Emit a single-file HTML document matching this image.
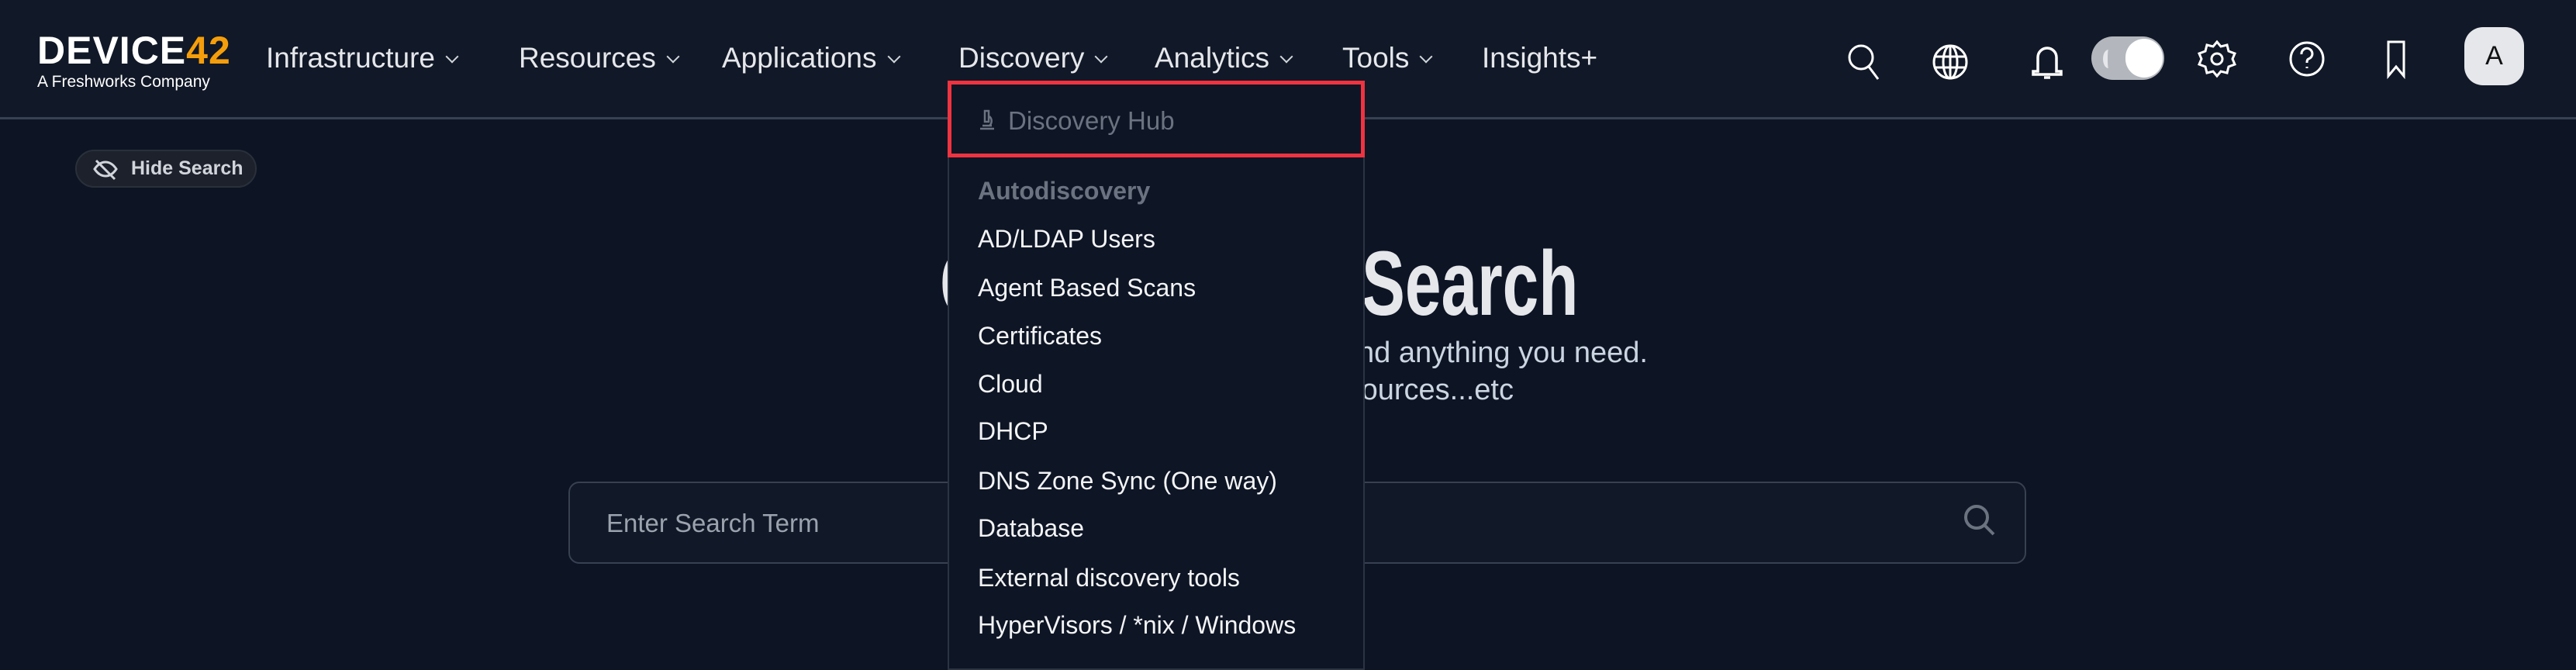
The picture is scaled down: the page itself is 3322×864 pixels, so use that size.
<!DOCTYPE html>
<html><head><meta charset="utf-8"><style>
*{margin:0;padding:0;box-sizing:border-box}
body{width:3322px;height:842px;overflow:hidden;background:#0d1424;font-family:"Liberation Sans",sans-serif;position:relative;color:#fff}
.hdr{position:absolute;left:0;top:0;width:3322px;height:154px;background:#111827;border-bottom:3px solid #374151}
.abs{position:absolute;white-space:nowrap}
.nav{font-size:37px;color:#e5e7eb;top:54px}
.chev{display:inline-block;width:12px;height:12px;border-right:2.5px solid #d1d5db;border-bottom:2.5px solid #d1d5db;transform:rotate(45deg);margin-left:16px;position:relative;top:-8px}
.dd{position:absolute;left:1222px;top:104px;width:538px;height:760px;background:#0e1525;border:2px solid #2b3442}
.it{position:absolute;left:1261px;font-size:32px;color:#f3f4f6}
.ttl{top:307px;font-size:118px;line-height:1;font-weight:bold;color:#e5e7eb;transform:scaleX(0.71);transform-origin:left top}
</style></head><body>
<div class="hdr"></div>
<div class="abs" style="left:48px;top:36px;font-size:50px;font-weight:bold;letter-spacing:1px;color:#fff">DEVICE<span style="color:#f59e0b">42</span></div>
<div class="abs" style="left:48px;top:94px;font-size:21px;color:#fff">A Freshworks Company</div>
<div class="abs nav" style="left:343px">Infrastructure<span class="chev"></span></div>
<div class="abs nav" style="left:669px">Resources<span class="chev"></span></div>
<div class="abs nav" style="left:931px">Applications<span class="chev"></span></div>
<div class="abs nav" style="left:1236px">Discovery<span class="chev"></span></div>
<div class="abs nav" style="left:1489px">Analytics<span class="chev"></span></div>
<div class="abs nav" style="left:1731px">Tools<span class="chev"></span></div>
<div class="abs nav" style="left:1911px">Insights+</div>
<svg class="abs" style="left:2370px;top:50px" width="540" height="60" viewBox="0 0 540 60" fill="none" stroke="#fff" stroke-width="3">
<circle cx="30" cy="24" r="15"/><path d="M40 36l12 16"/>
<g transform="translate(145 30)"><ellipse cx="0" cy="0" rx="21" ry="21"/><ellipse cx="0" cy="0" rx="9" ry="21"/><path d="M-21 -7h42M-21 7h42M0 -21v42"/></g>
<path d="M258 42v-18a12 12 0 0 1 24 0v18h6v4h-36v-4z M266 50h8" stroke-width="3.5"/>
</svg>
<div class="abs" style="left:2697px;top:47px;width:94px;height:56px;border-radius:28px;background:#b3b7bd"></div>
<div class="abs" style="left:2741px;top:50px;width:48px;height:50px;border-radius:25px;background:#fff"></div>
<div class="abs" style="left:2712px;top:64px;width:14px;height:24px;border-radius:50%;border-left:6px solid #e5e7eb"></div>
<svg class="abs" style="left:2820px;top:46px" width="320" height="64" viewBox="0 0 320 64" fill="none" stroke="#fff" stroke-width="3">
<circle cx="39" cy="30" r="7"/><path d="M39 8l5 6 8-2 2 8 8 3-3 7 3 7-8 3-2 8-8-2-5 6-5-6-8 2-2-8-8-3 3-7-3-7 8-3 2-8 8 2z"/>
<circle cx="155" cy="30" r="21"/><path d="M148 24a7 7 0 1 1 9 6c-2 1-2 3-2 5M155 40v2"/>
<path d="M260 8h20v44l-10-12-10 12z"/>
</svg>
<div class="abs" style="left:3178px;top:35px;width:77px;height:75px;border-radius:24px;background:#e5e7eb;color:#111;font-size:34px;text-align:center;line-height:75px">A</div>
<div class="abs" style="left:97px;top:193px;width:234px;height:49px;border-radius:25px;background:#1c212b;border:2px solid #2a303a;color:#d1d5db;font-size:25px;font-weight:bold;line-height:45px;padding-left:70px">Hide Search</div>
<svg class="abs" style="left:118px;top:203px" width="36" height="30" viewBox="0 0 36 30" fill="none" stroke="#d1d5db" stroke-width="3"><path d="M4 15c8-12 20-12 28 0c-8 12-20 12-28 0z"/><path d="M6 4l24 24"/></svg>
<div class="abs ttl" style="left:1212px">Global</div>
<div class="abs ttl" style="left:1756px">Search</div>
<div class="abs" style="right:1197px;top:434px;font-size:38px;color:#cbd5e1">Use Global Search to find anything you need.</div>
<div class="abs" style="right:1370px;top:482px;font-size:38px;color:#cbd5e1">Devices, Applications, Resources...etc</div>
<div class="abs" style="left:733px;top:621px;width:1880px;height:106px;border-radius:14px;background:#111827;border:2px solid #374151"></div>
<div class="abs" style="left:782px;top:656px;font-size:33px;color:#9ca3af">Enter Search Term</div>
<svg class="abs" style="left:2530px;top:648px" width="50" height="50" viewBox="0 0 50 50" fill="none" stroke="#6b7280" stroke-width="4"><circle cx="19" cy="19" r="14"/><path d="M29 29l12 12"/></svg>
<div class="dd"></div>
<div class="abs" style="left:1222px;top:104px;width:538px;height:99px;border:5px solid #ef3340;background:#0e1525"></div>
<svg class="abs" style="left:1258px;top:140px" width="30" height="30" viewBox="0 0 30 30" fill="none" stroke="#6b7280" stroke-width="2.5"><path d="M12 3h5v14h-5zM6 26h18M9 22h12M18 10a8 8 0 0 1 0 12"/></svg>
<div class="abs" style="left:1300px;top:137px;font-size:33px;color:#6b7280">Discovery Hub</div>
<div class="abs" style="left:1261px;top:228px;font-size:32px;font-weight:bold;color:#6b7280">Autodiscovery</div>
<div class="it" style="top:290px">AD/LDAP Users</div>
<div class="it" style="top:353px">Agent Based Scans</div>
<div class="it" style="top:415px">Certificates</div>
<div class="it" style="top:477px">Cloud</div>
<div class="it" style="top:538px">DHCP</div>
<div class="it" style="top:602px">DNS Zone Sync (One way)</div>
<div class="it" style="top:663px">Database</div>
<div class="it" style="top:727px">External discovery tools</div>
<div class="it" style="top:788px">HyperVisors / *nix / Windows</div>
</body></html>
